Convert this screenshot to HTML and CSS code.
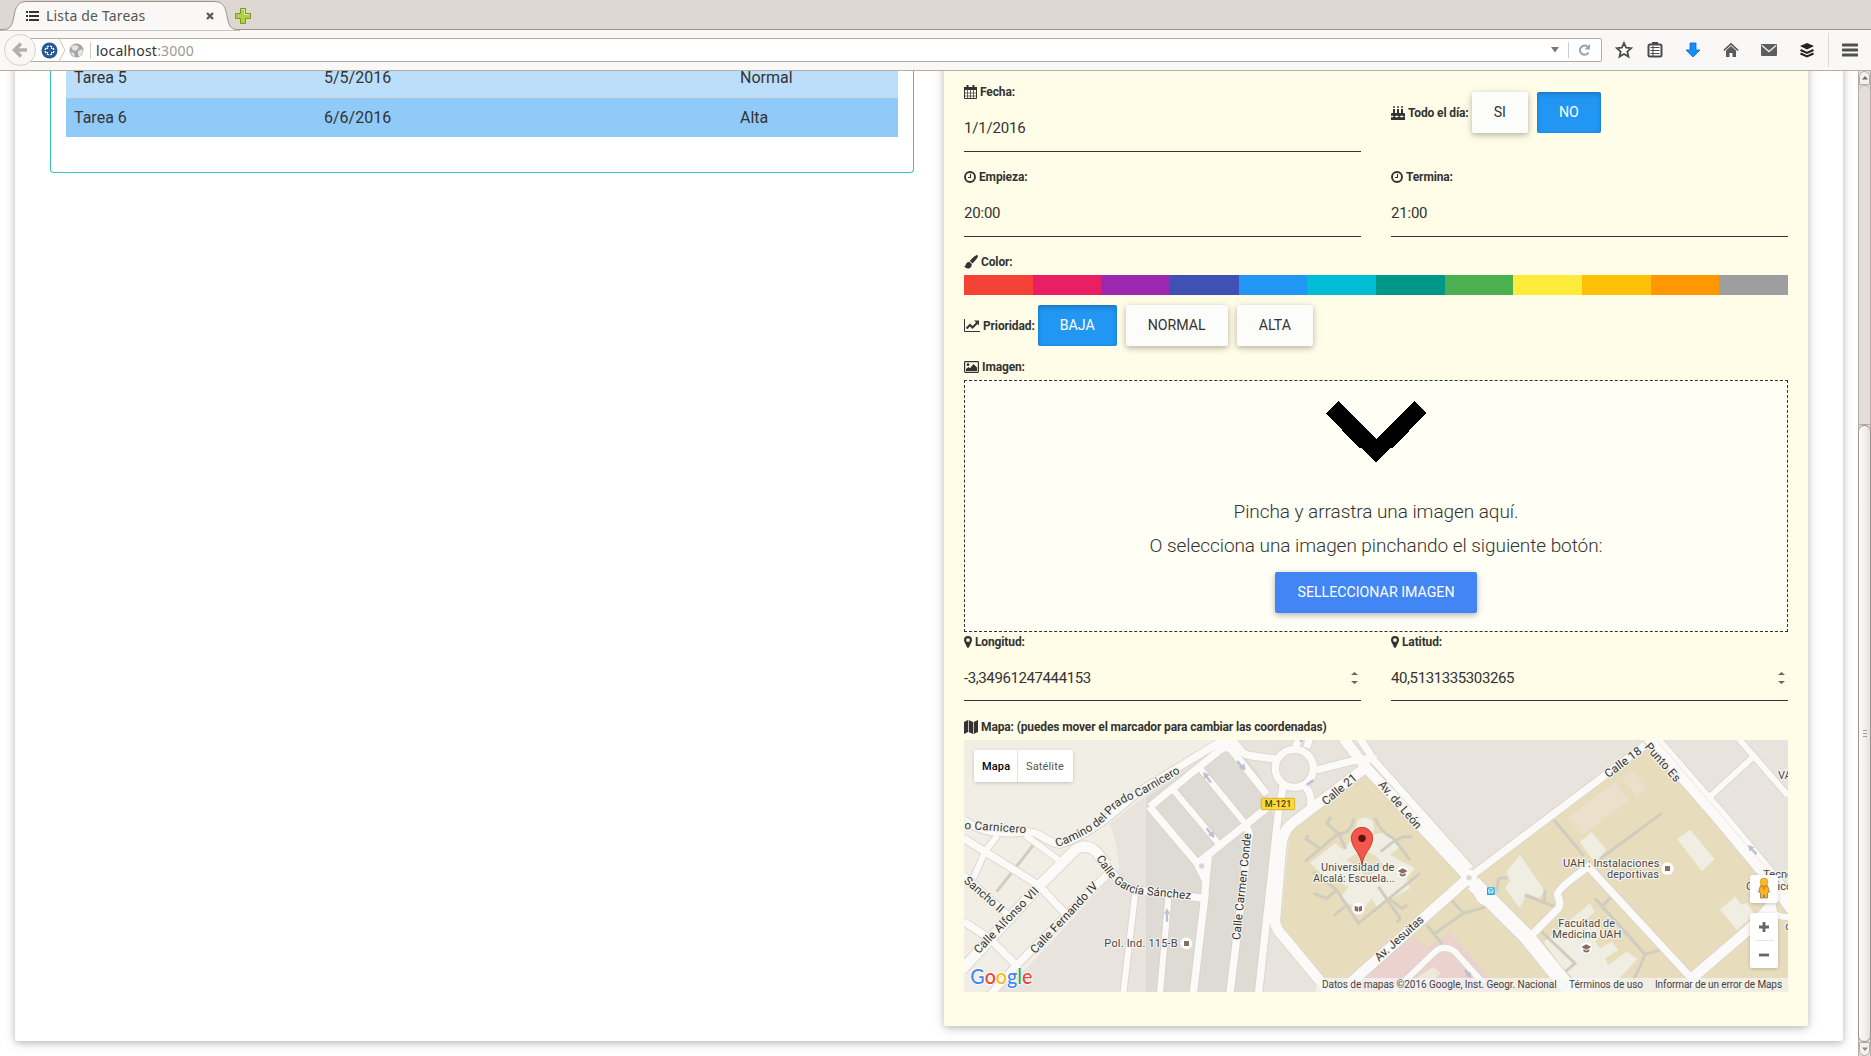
FILE: index.html
```html
<!DOCTYPE html>
<html lang="es">
<head>
<meta charset="utf-8">
<title>Lista de Tareas</title>
<link rel="stylesheet" href="styles.css">
</head>
<body>
<header class="browser">
  <div class="tabstrip">
    <svg class="tab-shape" width="240" height="31" viewBox="0 0 240 31"><path d="M0 29.500H4C11 29.500 12.500 24 14 16C15.500 7 18 1.500 27 1.500H214C223 1.500 225.500 7 227 16C228.500 24 230 29.500 237 29.500H240V31H0Z" fill="#f9f8f6" stroke="#9b938c"/></svg>
    <div class="tab">
      <svg width="13" height="12" viewBox="0 0 13 12" fill="#333"><path d="M0 1h2v2H0zM3 1h10v2H3zM0 5h2v2H0zM3 5h10v2H3zM0 9h2v2H0zM3 9h10v2H3z"/></svg>
      <span class="tab-title">Lista de Tareas</span>
      <svg width="10" height="10" viewBox="0 0 10 10"><path d="M2 2l6 6M8 2l-6 6" stroke="#5b5b5b" stroke-width="2.400"/></svg>
    </div>
    <svg class="new-tab" width="18" height="18" viewBox="0 0 18 18"><path d="M6.500 1.500h5v5h5v5h-5v5h-5v-5h-5v-5h5z" fill="#b5cf45" stroke="#6f9a2c" stroke-linejoin="round"/><path d="M7.500 2.500h3v5h5" fill="none" stroke="#d9e897"/></svg>
  </div>
  <div class="toolbar">
    <div class="back"><svg width="16" height="16" viewBox="0 0 16 16"><path d="M9 1.500L2.500 8 9 14.500M3 8h12" fill="none" stroke="#b3b0ad" stroke-width="3.600"/></svg></div>
    <div class="urlbar">
      <svg width="17" height="17" viewBox="0 0 17 17"><circle cx="8.500" cy="8.500" r="8" fill="#2a5796"/><circle cx="8.500" cy="8.500" r="5" fill="#fff"/><path d="M8.500 2v13M2 8.500h13" stroke="#2a5796" stroke-width="1.200"/><path d="M8.500 5v7M5 8.500h7" stroke="#2a5796" stroke-width="3"/><path d="M4.500 4.500l1.500 1.500M12.500 4.500l-1.500 1.500M4.500 12.500l1.500-1.500M12.500 12.500l-1.500-1.500" stroke="#2a5796" stroke-width="1.500"/></svg>
      <svg width="8" height="22" viewBox="0 0 8 22"><path d="M1 0l6 11-6 11" fill="none" stroke="#c9c7c5"/></svg>
      <svg class="globe" width="15" height="15" viewBox="0 0 15 15"><circle cx="7.500" cy="7.500" r="7" fill="#a5a5a5"/><path d="M2 3l5-1 3 2-2 3-3 1-2-2zM9 8l4-2 1 3-3 5-2-2zM2 9l3 1 1 4-3-2z" fill="#e4e4e4"/></svg>
      <span class="url"><b>localhost</b>:3000</span>
      <svg class="drop" width="8" height="6" viewBox="0 0 8 6"><path d="M0 0h8L4 5.500z" fill="#777"/></svg>
      <svg class="reload" width="13" height="13" viewBox="0 0 13 13"><path d="M10.500 9A4.600 4.600 0 1 1 9.600 3.200" fill="none" stroke="#95a2b0" stroke-width="2"/><path d="M12 .5v5.500H6.500z" fill="#95a2b0"/></svg>
    </div>
    <div class="tools">
      <svg width="18" height="18" viewBox="0 0 18 18"><path d="M9 2l2.100 4.700 5.100.5-3.900 3.400 1.200 5L9 13l-4.500 2.600 1.200-5L1.800 7.200l5.100-.5z" fill="#fff" stroke="#4c4c4c" stroke-width="1.800"/></svg>
      <svg width="16" height="16" viewBox="0 0 16 16"><path d="M5 0h6v3H5z" fill="#4a4a4a"/><rect x="1.500" y="2.500" width="13" height="12" rx="1.500" fill="#fff" stroke="#4a4a4a" stroke-width="2"/><path d="M3.500 5.500h9M3.500 8.500h9M3.500 11.500h9" stroke="#4a4a4a" stroke-width="1.200"/><path d="M6 4v10" stroke="#4a4a4a"/></svg>
      <svg width="16" height="16" viewBox="0 0 16 16"><path d="M5 1h6v7h4L8 15 1 8h4z" fill="#1590fb" stroke="#0c64c0" stroke-width=".8"/></svg>
      <svg width="16" height="16" viewBox="0 0 16 16"><path d="M.8 8.500L8 1.800l7.200 6.700" fill="none" stroke="#555" stroke-width="1.600"/><path d="M3 8.500l5-4.600 5 4.600V15H9.500v-4h-3v4H3z" fill="#5b5b5b"/></svg>
      <svg width="16" height="14" viewBox="0 0 16 14"><rect y="1" width="16" height="12" rx="1" fill="#5d5d5d"/><path d="M1 2.500l7 6 7-6" fill="none" stroke="#eee" stroke-width="1.400"/></svg>
      <svg width="16" height="16" viewBox="0 0 16 16"><path d="M8 1l7 3-7 3.500L1 4z" fill="#222"/><path d="M1.500 8L8 11l6.500-3M1.500 11.500L8 14.500l6.500-3" fill="none" stroke="#222" stroke-width="2"/></svg>
      <svg width="16" height="14" viewBox="0 0 16 14"><path d="M1 2h14M1 7h14M1 12h14" stroke="#505050" stroke-width="3" stroke-linecap="round"/></svg>
    </div>
  </div>
</header>
<div class="viewport">
<div class="page">
<main class="card">
  <section class="tasks">
    <div class="row row-light"><span>Tarea 5</span><span>5/5/2016</span><span>Normal</span></div>
    <div class="row row-dark"><span>Tarea 6</span><span>6/6/2016</span><span>Alta</span></div>
  </section>
  <section class="editor">
    <div class="pair">
      <div class="field">
        <label class="lbl"><svg width="13" height="14" viewBox="0 0 13 14"><path d="M.5 3h12v10.500H.5z" fill="none" stroke="#333"/><path d="M0 2h13v3H0zM2.500 0h2v3h-2zM8.500 0h2v3h-2z" fill="#333"/><path d="M3.500 5v9M6.500 5v9M9.500 5v9M0 8h13M0 11h13" stroke="#333" stroke-width=".7"/></svg>Fecha:</label>
        <div class="input">1/1/2016</div>
      </div>
      <div class="inline-field allday">
        <label class="lbl"><svg width="14" height="14" viewBox="0 0 14 14" fill="#333"><path d="M2 3h2v4h2V3h2v4h2V3h2v4h1q1 0 1 1v2q-1 1-2 0t-2.500 0-2.500 0-2.500 0T2 10t-2 0V8q0-1 1-1h1zM2.300 0h1.400v2H2.300zM6.300 0h1.400v2H6.300zM10.300 0h1.400v2h-1.400zM0 11q1 .8 2 0t2.500 0 2.500 0 2.500 0 2.500 0 2 0v3H0z"/></svg>Todo el día:</label>
        <button class="btn">SI</button><button class="btn on">NO</button>
      </div>
    </div>
    <div class="pair">
      <div class="field">
        <label class="lbl"><svg width="12" height="12" viewBox="0 0 12 12" fill="none" stroke="#333"><circle cx="6" cy="6" r="5" stroke-width="1.900"/><path d="M6.500 3v3.500H4" stroke-width="1.100"/></svg>Empieza:</label>
        <div class="input">20:00</div>
      </div>
      <div class="field">
        <label class="lbl"><svg width="12" height="12" viewBox="0 0 12 12" fill="none" stroke="#333"><circle cx="6" cy="6" r="5" stroke-width="1.900"/><path d="M6.500 3v3.500H4" stroke-width="1.100"/></svg>Termina:</label>
        <div class="input">21:00</div>
      </div>
    </div>
    <label class="lbl"><svg width="14" height="14" viewBox="0 0 14 14" fill="#333"><path d="M12.300.2q1.700-.4 1.600 1.200-.2 1.600-5.400 7L5.800 6Q10 1 12.300.2zM5.200 6.800l2.600 2.300Q8 12 5.500 13.300 2.500 14.500 0 11q1 .2 1.500-.6Q2.500 7 5.200 6.800z"/></svg>Color:</label>
    <div class="palette"><i class="c1"></i><i class="c2"></i><i class="c3"></i><i class="c4"></i><i class="c5"></i><i class="c6"></i><i class="c7"></i><i class="c8"></i><i class="c9"></i><i class="c10"></i><i class="c11"></i><i class="c12"></i></div>
    <div class="inline-field">
      <label class="lbl"><svg width="16" height="13" viewBox="0 0 16 13" fill="none" stroke="#333"><path d="M.5 0v12.500H16"/><path d="M2.500 9.500L6 6l2.500 2.500L13 4" stroke-width="2"/><path d="M10 1.500h5v5z" fill="#333" stroke="none"/></svg>Prioridad:</label>
      <button class="btn on">BAJA</button><button class="btn">NORMAL</button><button class="btn">ALTA</button>
    </div>
    <label class="lbl image-label"><svg width="15" height="12" viewBox="0 0 15 12"><rect x=".6" y=".6" width="13.800" height="10.800" rx=".8" fill="none" stroke="#333" stroke-width="1.200"/><circle cx="4" cy="3.700" r="1.400" fill="#333"/><path d="M2 10V8l2.500-2L6 7.300 9.500 3 13 6.500V10z" fill="#333"/></svg>Imagen:</label>
    <div class="dropzone">
      <svg width="101" height="61" viewBox="0 0 101 61" shape-rendering="crispEdges"><path d="M0 12L12 0l38 38L88 0l12 12-33 35h-2L50 61 35 47h-2z"/></svg>
      <p class="hint-a">Pincha y arrastra una imagen aquí.</p>
      <p class="hint-b">O selecciona una imagen pinchando el siguiente botón:</p>
      <button class="btn pick">SELLECCIONAR IMAGEN</button>
    </div>
    <div class="pair coords">
      <div class="field">
        <label class="lbl"><svg width="8" height="12" viewBox="0 0 8 12"><path d="M4 0q4 .2 4 4 0 1-.5 2L5 11.300q-1 1.400-2 0L.5 6Q0 5 0 4 0 .2 4 0zm0 2.200a1.900 1.900 0 1 0 0 3.800 1.900 1.900 0 1 0 0-3.800" fill="#333" fill-rule="evenodd"/></svg>Longitud:</label>
        <div class="input">-3,34961247444153<svg class="spin" width="7" height="12" viewBox="0 0 7 12"><path d="M0 3h7L3.500 0zM0 9h7l-3.500 3z" fill="#666"/></svg></div>
      </div>
      <div class="field">
        <label class="lbl"><svg width="8" height="12" viewBox="0 0 8 12"><path d="M4 0q4 .2 4 4 0 1-.5 2L5 11.300q-1 1.400-2 0L.5 6Q0 5 0 4 0 .2 4 0zm0 2.200a1.900 1.900 0 1 0 0 3.800 1.900 1.900 0 1 0 0-3.800" fill="#333" fill-rule="evenodd"/></svg>Latitud:</label>
        <div class="input">40,5131335303265<svg class="spin" width="7" height="12" viewBox="0 0 7 12"><path d="M0 3h7L3.500 0zM0 9h7l-3.500 3z" fill="#666"/></svg></div>
      </div>
    </div>
    <label class="lbl"><svg width="14" height="14" viewBox="0 0 14 14" fill="#333"><path d="M0 2l4-2v12l-4 2zM4.700 0l4.300 2v12l-4.300-2zM9.700 2L14 0v12l-4.300 2z"/></svg>Mapa: (puedes mover el marcador para cambiar las coordenadas)</label>
    <div class="map">
      <svg class="map-canvas" width="824" height="252" viewBox="12 15 2472 756">
        <defs>
          <g id="lanes-s">
            <path d="M195 300L300 378M12 420L150 545M525 480L490 775M625 490L600 775M640 165L775 325M720 100L855 265M75 350L40 430M75 350L112 302"/>
            <path d="M1300 771L1420 655Q1450 625 1485 650L1570 745"/>
            <path d="M2250 185L2380 65M2335 10L2484 182"/>
            <path d="M2484 545Q2450 550 2430 520"/>
          </g>
          <g id="lanes-m">
            <path d="M12 255C60 290 110 300 200 290C240 290 255 320 300 328C420 290 500 190 560 155L765 30Q800 5 825 25L850 55Q860 62 880 63L945 72"/>
            <path d="M570 215L780 45Q800 30 815 45L920 178M568 215L712 385L738 440M712 385L925 215M745 365Q735 460 735 480L700 775M855 265L868 295L810 775"/>
            <path d="M12 310L75 350L235 450L320 540M12 560L90 612L170 692M90 780L170 690L450 410M430 380Q480 450 525 465L735 490"/>
            <path d="M1005 35L1025 5M1040 38L1050 5M970 150L955 235L895 780M1035 155Q1060 180 1050 225M1070 105L1200 72L1250 72M1200 10L1245 80L1530 400M1527 428L1710 290L2055 30"/>
            <path d="M1527 428L1560 490Q1580 510 1610 500M1710 605L1795 520Q1805 505 1792 480Q1792 460 1885 395L2190 725L2210 750"/>
            <circle cx="1003" cy="100" r="57"/>
          </g>
          <g id="lanes-l">
            <path d="M5 705L240 450L345 345Q380 322 410 352L440 390"/>
            <path d="M1220 95L990 270Q965 295 962 350L945 555Q945 580 970 605L1115 780M1150 10L1220 100L1527 428M1527 428L1130 780M2190 735L2370 580L2430 515M2430 490L2435 530"/>
          </g>
          <g id="lanes-xl"><path d="M1540 445L1600 505L1700 605L1850 790M2070 5L2275 240L2450 450L2500 520"/></g>
          <path id="p-prado" d="M292 337C370 305 415 280 450 240S510 195 540 184L690 96"/>
          <path id="p-garcia" d="M408 370C450 440 490 478 560 480L720 496"/>
        </defs>
        <rect x="12" y="15" width="2472" height="756" fill="#e8e4dd"/>
        <path d="M12 15H780L560 180L450 265L468 330L478 400L210 690L110 771H12z" fill="#f0eee5"/>
        <path d="M558 190L800 25L850 60L900 120L925 190L945 260L890 771H558z" fill="#dedad4"/>
        <path d="M1215 110L990 290L962 570L1120 771H2484V510L2420 430L2070 40L1527 428z" fill="#e7ddbd"/>
        <path d="M1170 745L1360 605L1405 637L1470 590L1640 790H1150z" fill="#ebd2cf"/>
        <path d="M1340 750L1420 695L1442 715L1380 771H1330z" fill="#eee9dc"/>
        <path d="M1823 248L1965 142L2007 197L1865 300zM1985 127L2017 106L2059 158L2030 184z" fill="#ece0cd"/>
        <path d="M1860 322L1895 290L1938 345L1905 385zM2152 312L2190 284L2264 373L2225 409zM2280 523L2325 485L2345 510L2360 503L2385 540L2330 585zM1680 360L1755 470L1735 490L1700 475L1680 520L1635 460L1650 435L1640 410zM1752 620L1890 505L1905 530L1860 570L1875 585L1890 570L1930 590L1905 620L1920 640L1955 620L1975 645L1935 670L1945 690L2000 650L2032 672L1960 750L1900 771H1870L1830 720L1800 690z" fill="#f0eee2"/>
        <path d="M1050 385L1125 325L1150 345L1185 300L1215 270L1240 300L1280 290L1320 335L1290 360L1365 400L1340 430L1350 460L1250 515L1235 490L1205 530L1140 490L1165 455L1090 420z" fill="#f0eee2"/>
        <circle cx="1215" cy="275" r="27" fill="#f0eee2"/>
        <path d="M1160 375L1205 345L1245 360L1275 395L1220 425z" fill="#e7ddbd"/>
        <g class="paths">
          <path d="M110 470L220 330M1035 380L1135 295Q1170 300 1182 250M1135 295L1100 265Q1110 250 1112 245M1080 340L1038 312L1045 300M1135 295L1158 342M1245 248Q1260 290 1300 310L1350 375M1300 320L1262 350M1300 320L1330 305H1355M1060 475L1100 490L1130 465L1195 565L1380 415M1130 465L1060 410M1155 515L1122 542M1255 455L1320 550Q1320 558 1308 560M1285 488L1325 520L1342 510"/>
          <path d="M1400 570L1445 625M1425 595L1510 535L1590 512M1510 535L1470 490M1610 470L1615 435Q1620 425 1640 430"/>
          <path d="M1782 255L1845 330L1870 362M1920 372L2105 235M1694 480L1785 515M1752 500L1755 465M1745 590L1845 685L1810 715M1905 490L2055 658L2100 645M2055 658Q2040 700 2020 735M1930 510L1955 485"/>
        </g>
        <g class="case"><use href="#lanes-s" stroke-width="23"/><use href="#lanes-m" stroke-width="27"/><use href="#lanes-l" stroke-width="36"/><use href="#lanes-xl" stroke-width="51"/></g>
        <g class="lane"><use href="#lanes-s" stroke-width="18"/><use href="#lanes-m" stroke-width="22"/><use href="#lanes-l" stroke-width="31"/><use href="#lanes-xl" stroke-width="46"/></g>
        <path d="M2090 15L2240 190L2450 435" stroke="#eae7df" stroke-width="3" fill="none"/>
        <circle cx="1527" cy="428" r="24" fill="#fbfaf8"/><circle cx="1527" cy="428" r="8" fill="#dcd9cf"/><circle cx="725" cy="393" r="20" fill="#fbfaf8"/><circle cx="725" cy="393" r="8" fill="#d9d6d0"/>
        <g class="arrows">
          <path d="M753 143L738 123"/><path d="M832 78L848 98M740 280L756 300M621 560V528M1040 150L1060 135M1515 705L1528 722M2390 358L2372 338M1020 20L1028 15"/>
          <path d="M729 111l4 22 16-14zM857 107l-4-22-16 14zM764 309l-4-22-16 14zM621 519l-9 18h18zM1535 730l-4-20-14 12zM2364 330l5 20 14-14z" class="heads"/>
        </g>
        <g class="road-names">
          <text><textPath href="#p-prado" textLength="436">Camino del Prado Carnicero</textPath></text>
          <text><textPath href="#p-garcia" textLength="330">Calle García Sánchez</textPath></text>
          <text transform="translate(4 281) rotate(4)" textLength="194">lo Carnicero</text>
          <text transform="translate(10 440) rotate(41)" textLength="145">Sancho II</text>
          <text transform="translate(56 658) rotate(-46)" textLength="262">Calle Alfonso VII</text>
          <text transform="translate(226 658) rotate(-47)" textLength="278">Calle Fernando IV</text>
          <text transform="translate(840 616) rotate(-84)" textLength="322">Calle Carmen Conde</text>
          <text transform="translate(1098 212) rotate(-40)" textLength="124">Calle 21</text>
          <text transform="translate(1253 150) rotate(49)" textLength="178">Av. de León</text>
          <text transform="translate(1257 680) rotate(-42)" textLength="184">Av. Jesuitas</text>
          <text transform="translate(1945 130) rotate(-37)" textLength="128">Calle 18</text>
          <text transform="translate(2053 36) rotate(49)" textLength="142">Punto Es</text>
          <text transform="translate(2030 12) rotate(49)">.</text>
        </g>
        <g class="places">
          <text x="433" y="635" textLength="220">Pol. Ind. 115-B</text>
          <text x="1083" y="407" textLength="220">Universidad de</text><text x="1059" y="440" textLength="245">Alcalá: Escuela...</text>
          <text x="1809" y="395" textLength="289">UAH : Instalaciones</text><text x="1941" y="428" textLength="156">deportivas</text>
          <text x="1795" y="575" textLength="170">Facultad de</text><text x="1777" y="608" textLength="207">Medicina UAH</text>
          <text x="2454" y="132">VA</text><text x="2410" y="430">Tecnológico</text><text x="2358" y="464">Científico</text><text x="2476" y="585">d</text>
        </g>
        <g fill="#fff" stroke="#e4dfd3" stroke-width="1.500"><circle cx="679" cy="625" r="18"/><circle cx="1328" cy="411" r="19"/><circle cx="1195" cy="520" r="19"/><circle cx="2122" cy="401" r="19"/><circle cx="1879" cy="639" r="19"/></g>
        <g fill="#8a6d60"><path d="M672 618h15v15h-15zM2115 393h15v15h-15z"/><path d="M1313 408l15-8 15 8-15 8zM1319 414l9 5 9-5v7q-9 7-18 0zM1864 636l15-8 15 8-15 8zM1870 642l9 5 9-5v7q-9 7-18 0zM1184 512l10 4v14l-10-3zM1206 512l-10 4v14l10-3z"/></g>
        <rect x="904" y="190" width="100" height="34" rx="2" fill="#fbd936" stroke="#d8b52d" stroke-width="3"/><text class="shield" x="914" y="217" textLength="80">M-121</text>
        <rect x="1581" y="457" width="23" height="23" fill="#17a7e8"/><rect x="1586" y="461" width="13" height="12" rx="2" fill="none" stroke="#fff" stroke-width="2.500"/><path d="M1586 468h13M1588 474v3M1597 474v3" stroke="#fff" stroke-width="2.500"/>
        <path d="M1206 390C1202 352 1174 340 1174 309A32 32 0 0 1 1238 309C1238 340 1210 352 1206 390z" fill="#f4564c" stroke="#b5322a" stroke-width="2.500"/><circle cx="1206" cy="310" r="11" fill="#5a130f"/>
        <text class="logo" x="31" y="748" textLength="186" lengthAdjust="spacingAndGlyphs"><tspan fill="#4285f4">G</tspan><tspan fill="#ea4335">o</tspan><tspan fill="#fbbc05">o</tspan><tspan fill="#4285f4">g</tspan><tspan fill="#34a853">l</tspan><tspan fill="#ea4335">e</tspan></text>
      </svg>
      <div class="map-type"><span class="sel">Mapa</span><span>Satélite</span></div>
      <div class="pegman"><svg width="14" height="22" viewBox="0 0 14 22"><path d="M3.500 8.500h7l2 6.500-2 1v5h-3v-3h-1v3h-3v-5l-2-1z" fill="#fbb51b" stroke="#7d7a70" stroke-width=".8"/><circle cx="7" cy="5" r="3.900" fill="#fbbb22" stroke="#c88e28" stroke-width=".6"/><path d="M4 9l3 4 3-4z" fill="#e58a19"/></svg></div>
      <div class="zoomer"><span><svg width="10" height="10"><path d="M5 0v10M0 5h10" stroke="#666" stroke-width="2.800"/></svg></span><span><svg width="10" height="10"><path d="M0 5h10" stroke="#666" stroke-width="2.800"/></svg></span></div>
      <div class="legal"><span class="l1">Datos de mapas ©2016 Google, Inst. Geogr. Nacional</span><span class="l2">Términos de uso</span><span class="l3">Informar de un error de Maps</span></div>
    </div>
  </section>
</main>
</div>
<div class="scrollbar">
  <div class="arrow"><svg width="6" height="4" viewBox="0 0 6 4"><path d="M0 3.500L3 0l3 3.500z" fill="#6d6863"/></svg></div>
  <div class="track"></div>
  <div class="thumb"><i></i><i></i><i></i></div>
  <div class="arrow down"><svg width="6" height="4" viewBox="0 0 6 4"><path d="M0 .5L3 4l3-3.500z" fill="#8d8883"/></svg></div>
</div>
</div>
</body>
</html>
```
FILE: styles.css
```css
* { box-sizing: border-box; }
body { margin: 0; height: 1056px; overflow: hidden; font-family: Roboto, sans-serif; color: #333; background: #fff; display: flex; flex-direction: column; }
svg { display: block; flex: none; }
.browser { flex: none; font-family: "Noto Sans", sans-serif; }
.tabstrip { height: 30px; background: #dfd7d1; border-bottom: 1px solid #9b938c; position: relative; display: flex; align-items: center; }
.tab-shape { position: absolute; left: 0; top: 0; }
.tab { position: relative; width: 234px; padding: 2px 19px 0 26px; display: flex; align-items: center; height: 30px; }
.tab-title { font-size: 14px; letter-spacing: .17px; color: #555; margin-left: 7px; flex: 1; white-space: nowrap; }
.new-tab { position: relative; margin-top: 2px; }
.toolbar { height: 41px; background: #f9f8f6; border-bottom: 1px solid #b9aca2; display: flex; align-items: center; }
.back { width: 32px; height: 32px; margin-left: 4px; border: 1px solid #d5d1ce; border-radius: 50%; background: #f9f8f6; display: flex; align-items: center; justify-content: center; z-index: 1; }
.urlbar { width: 1572px; height: 24px; margin-left: -6px; border: 1px solid #b9aca2; border-radius: 0 2px 2px 0; background: #fff; display: flex; align-items: center; padding-left: 10px; padding-right: 10px; }
.globe { margin: 0 6px 0 3px; }
.url { border-left: 1px solid #ccc; padding-left: 5px; font-size: 14px; line-height: 18px; height: 17px; color: #999; flex: 1; letter-spacing: .22px; }
.url b { font-weight: 400; color: #333; }
.drop { margin-right: 9px; }
.reload { box-sizing: content-box; height: 16px; border-left: 1px solid #ccc; padding-left: 9px; }
.tools { display: flex; flex: 1; height: 40px; gap: 22px; align-items: center; padding-left: 13px; }
.tools svg:first-child { margin-right: -8px; }
.tools svg:last-child { box-sizing: content-box; height: 34px; padding-left: 13px; margin-left: -9px; border-left: 1px solid #dedad6; }
.viewport { flex: 1; min-height: 0; display: flex; overflow: hidden; }
.page { flex: 1; overflow: hidden; }
.card { height: 1000px; margin: -30px 15px 0; padding: 30px 35px 0; border-radius: 3px; background: #fff; box-shadow: 0 2px 6px rgba(0,0,0,.18), 0 2px 14px rgba(0,0,0,.13); display: flex; gap: 30px; align-items: flex-start; }
.tasks { width: 864px; height: 102px; border: 1px solid #36c6b7; border-top: 0; border-radius: 0 0 4px 4px; padding: 0 15px; overflow: hidden; font-size: 16px; }
.row { display: grid; grid-template-columns: 250px 416px 1fr; padding-left: 8px; height: 39px; line-height: 39px; }
.row-light { height: 27px; line-height: 13px; background: #bbdefb; border-bottom: 1px solid #d0d8de; }
.row-dark { background: #90caf9; }
.editor { width: 864px; height: 985px; margin-top: -30px; padding: 42px 20px 0; background: #fffde7; border-radius: 2px; box-shadow: 0 2px 6px rgba(0,0,0,.18), 0 2px 14px rgba(0,0,0,.13); }
.pair { display: grid; grid-template-columns: 1fr 1fr; gap: 30px; margin-bottom: 16px; }
.lbl { display: flex; align-items: center; gap: 3px; height: 18px; font-size: 12px; font-weight: 700; line-height: 18px; letter-spacing: -.13px; white-space: nowrap; }
.input { height: 51px; border-bottom: 1px solid #333; font-size: 15px; line-height: 55px; letter-spacing: -.2px; display: flex; justify-content: space-between; }
.coords { padding-top: 1px; }
.coords .input { height: 50px; letter-spacing: -.4px; }
.spin { margin: 21px 3px 0 0; }
.inline-field { display: flex; align-items: center; }
.inline-field .lbl { margin-right: 3px; }
.allday { height: 41px; margin-top: 9px; }
.btn { height: 41px; padding: 0 22px 2px; margin: 0 9px 0 0; border: 0; border-radius: 2px; background: #fcfcfb; color: #333; font: 400 14.200px Roboto, sans-serif; white-space: nowrap; box-shadow: 0 2px 5px rgba(0,0,0,.18), 0 2px 10px rgba(0,0,0,.14); }
.btn.on { background: #2196f3; color: #fff; box-shadow: inset 0 3px 5px rgba(0,0,0,.14), inset 0 0 3px rgba(0,0,0,.12); }
.palette { display: flex; height: 20px; margin: 4px 0 10px; }
.palette i { flex: 1; }
.c1 { background: #f44336; } .c2 { background: #e91e63; } .c3 { background: #9c27b0; } .c4 { background: #3f51b5; }
.c5 { background: #2196f3; } .c6 { background: #00bcd4; } .c7 { background: #009688; } .c8 { background: #4caf50; }
.c9 { background: #ffeb3b; } .c10 { background: #ffc107; } .c11 { background: #ff9800; } .c12 { background: #9e9e9e; }
.image-label { margin: 12px 0 4px; }
.dropzone { height: 252px; border: 1px dashed #333; background: #fffff5; display: flex; flex-direction: column; align-items: center; padding-top: 20px; }
.dropzone p { margin: 0; font-size: 19px; font-weight: 300; line-height: 34px; letter-spacing: -.06px; white-space: nowrap; }
.dropzone .hint-a { margin-top: 33px; }
.dropzone .pick { margin: 9px 0 0; background: #4285f4; color: #fff; }
.map { position: relative; height: 252px; margin-top: 5px; overflow: hidden; }
.coords + .lbl { padding-top: 1px; }
.case, .lane { fill: none; stroke-linejoin: round; }
.case { stroke: #d8d4c9; }
.lane { stroke: #fbfaf8; }
.paths { fill: none; stroke: #d0ccbe; stroke-width: 9; }
.arrows { fill: none; stroke: #bcc1d2; stroke-width: 7; }
.heads { fill: #bcc1d2; stroke: none; }
.road-names, .places { font: 400 33px Roboto, sans-serif; fill: #333; stroke: #f5f3ee; stroke-width: 7; stroke-linejoin: round; paint-order: stroke; }
.road-names { font-size: 35px; }
.places { fill: #4d4743; }
.shield { font: 500 27px Roboto, sans-serif; fill: #4c4017; }
.logo { font: 500 62px Lato, sans-serif; stroke: #fff; stroke-width: 5; paint-order: stroke; }
.map-type { position: absolute; left: 10px; top: 10px; height: 32px; display: flex; background: #fff; border-radius: 2px; box-shadow: 0 1px 4px -1px rgba(0,0,0,.3); font-size: 11px; line-height: 34px; color: #565656; }
.map-type span { padding: 0 8px; width: 55px; white-space: nowrap; letter-spacing: .15px; }
.map-type .sel { width: 44px; border-right: 1px solid #e2e2e2; color: #000; font-weight: 500; }
.pegman, .zoomer { position: absolute; right: 10px; width: 28px; background: #fff; border-radius: 2px; box-shadow: 0 1px 4px -1px rgba(0,0,0,.3); display: flex; flex-direction: column; align-items: center; justify-content: center; }
.pegman { top: 135px; height: 28px; padding-bottom: 2px; }
.zoomer { top: 173px; height: 55px; }
.zoomer span { flex: 1; width: 19px; display: flex; align-items: center; justify-content: center; }
.zoomer span + span { border-top: 1px solid #e6e6e6; }
.legal { position: absolute; right: 0; bottom: 0; height: 14px; display: flex; background: rgba(245,245,245,.7); font-size: 10px; line-height: 13px; color: #444; white-space: nowrap; }
.legal span { padding: 0 6px; }
.legal .l1 { width: 247px; letter-spacing: -.03px; } .legal .l2 { width: 86px; } .legal .l3 { width: 139px; letter-spacing: -.1px; }
.scrollbar { width: 13px; background: #e3deda; border: 1px solid #b5aca4; border-width: 0 1px; display: flex; flex-direction: column; }
.arrow { height: 14px; background: #f3f1ef; border: 1px solid #b5aca4; border-radius: 6px 6px 0 0; display: flex; align-items: center; justify-content: center; flex: none; }
.track { height: 340px; flex: none; border: 1px solid #b5aca4; border-width: 1px 0; border-radius: 6px 6px 0 0; }
.thumb { flex: 1; border: 1px solid #9c958f; border-radius: 6px; margin: 0 -1px; background: linear-gradient(90deg, #fbfaf9, #f3f1ef 50%, #e6e1dd); display: flex; flex-direction: column; gap: 2px; align-items: center; justify-content: center; }
.thumb i { width: 4px; height: 1px; background: #a39c95; }
.arrow.down { border-radius: 0 0 6px 6px; }
```
